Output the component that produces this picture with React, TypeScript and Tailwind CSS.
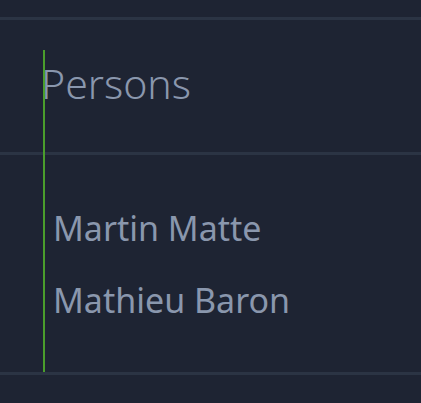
import React from "react"

const people = ["Martin Matte", "Mathieu Baron"]

export default function App() {
  return (
    <div
      className="relative min-h-screen bg-[#1e2433] text-[#8a97ad]"
      style={{ fontFamily: '"Noto Sans", Lato, sans-serif' }}
    >
      <div className="h-[17px]" />

      {/* header */}
      <div className="border-t-[3px] border-[#2b3444]">
        <div className="h-[132px] pl-[41px] pt-[39px]">
          <h1 className="text-[41px] font-light leading-[48px]">Persons</h1>
        </div>
      </div>

      {/* rows */}
      <div className="border-t-[3px] border-[#2b3444]">
        <div className="flex h-[217px] flex-col gap-[24px] pl-[53px] pt-[49px]">
          {people.map((name) => (
            <div key={name} className="text-[34px] leading-[48px]">
              {name}
            </div>
          ))}
        </div>
      </div>
      <div className="border-t-[3px] border-[#2b3444]" />

      {/* focus marker */}
      <div className="absolute left-[43px] top-[50px] h-[322px] w-[2px] bg-[#4a9e2c]" />
    </div>
  )
}
